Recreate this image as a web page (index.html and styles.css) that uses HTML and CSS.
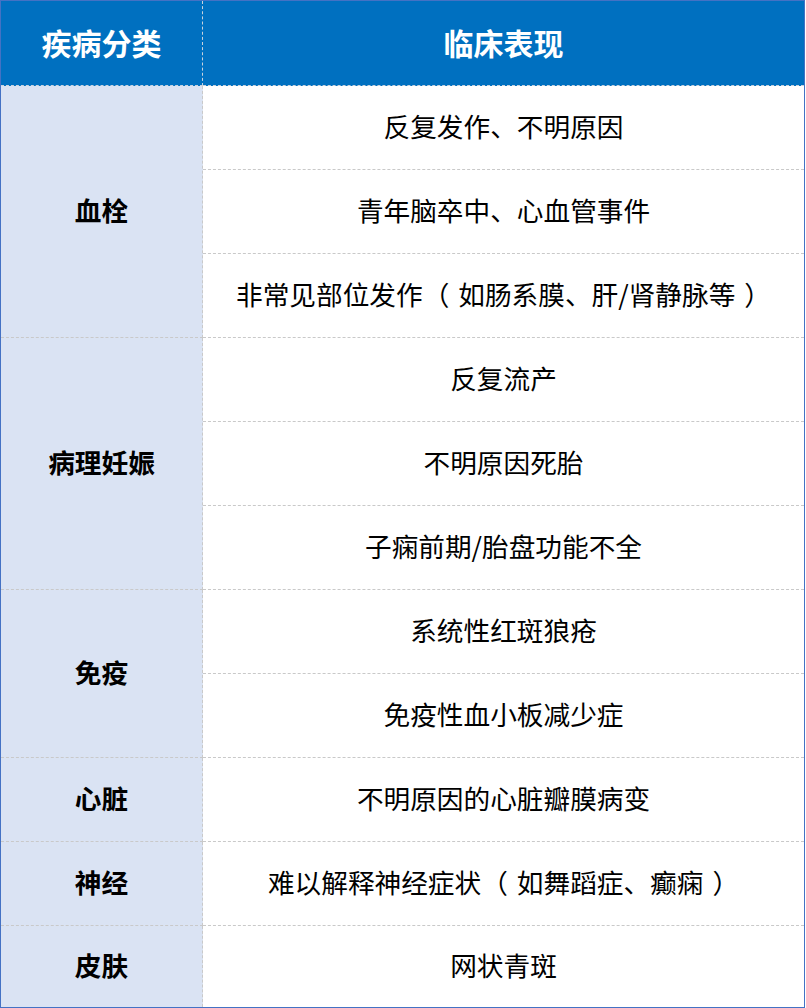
FILE: index.html
```html
<!DOCTYPE html>
<html lang="zh-CN">
<head>
<meta charset="utf-8">
<title>疾病分类与临床表现</title>
<link rel="stylesheet" href="styles.css">
</head>
<body>
<div class="table">
  <div class="cell head left">疾病分类</div>
  <div class="cell head right">临床表现</div>

  <div class="cell cat span3">血栓</div>
  <div class="cell item">反复发作、不明原因</div>
  <div class="cell item">青年脑卒中、心血管事件</div>
  <div class="cell item">非常见部位发作<span class="po">（</span>如肠系膜、肝/肾静脉等<span class="pc">）</span></div>

  <div class="cell cat span3">病理妊娠</div>
  <div class="cell item">反复流产</div>
  <div class="cell item">不明原因死胎</div>
  <div class="cell item">子痫前期/胎盘功能不全</div>

  <div class="cell cat span2">免疫</div>
  <div class="cell item">系统性红斑狼疮</div>
  <div class="cell item">免疫性血小板减少症</div>

  <div class="cell cat">心脏</div>
  <div class="cell item">不明原因的心脏瓣膜病变</div>

  <div class="cell cat">神经</div>
  <div class="cell item">难以解释神经症状<span class="po">（</span>如舞蹈症、癫痫<span class="pc">）</span></div>

  <div class="cell cat last">皮肤</div>
  <div class="cell item last">网状青斑</div>
</div>
</body>
</html>
```

FILE: styles.css
```css
html, body {
  margin: 0;
  padding: 0;
  background: #ffffff;
}

.table {
  box-sizing: border-box;
  width: 805px;
  height: 1008px;
  border: 1px solid #4472c4;
  display: grid;
  grid-template-columns: 202px 1fr;
  grid-template-rows: 85px repeat(10, 84px) 1fr;
  font-family: "Noto Sans CJK SC", "Microsoft YaHei", sans-serif;
  color: #000000;
}

.cell {
  box-sizing: border-box;
  display: flex;
  align-items: center;
  justify-content: center;
  padding-bottom: 2px;
  border-bottom: 1px dashed #c9c9c9;
  font-size: 26.67px;
  line-height: 1;
  white-space: nowrap;
}

.head {
  background: #0070c0;
  color: #ffffff;
  font-weight: 700;
  font-size: 30px;
  border-bottom-color: #c9d3de;
}

.head.left {
  border-right: 1px dashed #c9d3de;
}

.cat {
  grid-column: 1;
  background: #dae3f3;
  font-weight: 700;
  border-right: 1px dashed #c9c9c9;
}

.item {
  grid-column: 2;
}

.po {
  display: inline-block;
  margin-right: 9px;
}

.pc {
  display: inline-block;
  margin-left: 9px;
}

.span3 {
  grid-row: span 3;
}

.span2 {
  grid-row: span 2;
}

.last {
  border-bottom: none;
}
```
